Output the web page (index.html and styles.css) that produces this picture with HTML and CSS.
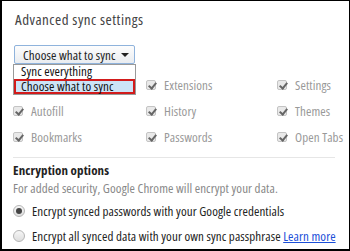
FILE: index.html
```html
<!DOCTYPE html>
<html lang="en">
<head>
    <meta charset="UTF-8">
    <title>Advanced sync settings</title>
    <link rel="stylesheet" href="styles.css">
</head>
<body>
    <div class="frame">
        <div class="title">Advanced sync settings</div>

        <div class="picker">
            <div class="select-box">
                <span>Choose what to sync</span>
                <span class="arrow"></span>
            </div>
            <div class="options">
                <div class="option">Sync everything</div>
                <div class="option selected">Choose what to sync</div>
            </div>
        </div>

        <div class="types">
            <div class="type"></div>
            <div class="type"><span class="check"></span>Extensions</div>
            <div class="type"><span class="check"></span>Settings</div>
            <div class="type"><span class="check"></span>Autofill</div>
            <div class="type"><span class="check"></span>History</div>
            <div class="type"><span class="check"></span>Themes</div>
            <div class="type"><span class="check"></span>Bookmarks</div>
            <div class="type"><span class="check"></span>Passwords</div>
            <div class="type"><span class="check"></span>Open Tabs</div>
        </div>

        <div class="section">
            <div class="section-title">Encryption options</div>
            <div class="hint">For added security, Google Chrome will encrypt your data.</div>
            <div class="radio-row"><span class="radio checked"></span>Encrypt synced passwords with your Google credentials</div>
            <div class="radio-row"><span class="radio"></span>Encrypt all synced data with your own sync passphrase&nbsp;<a class="link" href="#">Learn more</a></div>
        </div>
    </div>
</body>
</html>
```

FILE: styles.css
```css
* {
    margin: 0;
    padding: 0;
    box-sizing: border-box;
}

body {
    font-family: 'Open Sans', 'Noto Sans', sans-serif;
    font-stretch: condensed;
    font-size: 13px;
    letter-spacing: 0.1px;
    background: #ffffff;
    color: #333;
}

.frame {
    width: 350px;
    height: 251px;
    border-style: solid;
    border-color: #000;
    border-width: 1px 1px 2px 2px;
    padding: 9px 4px 0 11px;
    overflow: hidden;
}

.title {
    font-size: 15px;
    letter-spacing: 0.5px;
    line-height: 18px;
    color: #444;
    padding-left: 2px;
}

.picker {
    position: relative;
    width: 121px;
    margin-top: 17px;
    margin-left: 1px;
    z-index: 2;
}

.select-box {
    height: 19px;
    display: flex;
    align-items: center;
    justify-content: space-between;
    padding: 0 5px 0 8px;
    border: 1px solid #8fb3dc;
    border-radius: 2px;
    background: linear-gradient(#fdfdfd, #e9ecf0);
    color: #222;
}

.arrow {
    width: 0;
    height: 0;
    border-left: 4px solid transparent;
    border-right: 4px solid transparent;
    border-top: 4px solid #222;
}

.options {
    position: absolute;
    top: 19px;
    left: -1px;
    width: 123px;
    background: #fff;
    border: 1px solid #999;
    color: #111;
}

.option {
    height: 14px;
    line-height: 12px;
    padding-left: 7px;
}

.option.selected {
    height: 15px;
    background: #cce4f7;
    border: 2px solid #d21b1b;
    padding-left: 5px;
    line-height: 10px;
}

.types {
    display: grid;
    grid-template-columns: 133px 131px 1fr;
    grid-auto-rows: 26px;
    margin-top: 8px;
}

.type {
    display: flex;
    align-items: center;
    color: #999;
    white-space: nowrap;
}

.check {
    width: 10px;
    height: 10px;
    margin-right: 8px;
    border: 1px solid #c4c4c4;
    border-radius: 2px;
    background: #e9e9e9;
    position: relative;
    flex-shrink: 0;
}

.check::after {
    content: '';
    position: absolute;
    left: 3px;
    top: 0px;
    width: 3px;
    height: 6px;
    border-right: 2px solid #666;
    border-bottom: 2px solid #666;
    transform: rotate(40deg);
}

.section {
    margin-top: 7px;
    padding-top: 4px;
    margin-right: 10px;
    border-top: 1px solid #e6e6e6;
}

.section-title {
    font-weight: 700;
    line-height: 16px;
    color: #222;
}

.hint {
    margin-top: 2px;
    line-height: 16px;
    color: #888;
}

.radio-row {
    display: flex;
    align-items: center;
    height: 20px;
    margin-top: 5px;
    color: #222;
    white-space: nowrap;
}

.radio-row + .radio-row {
    margin-top: 5px;
}

.radio {
    width: 12px;
    height: 12px;
    margin-right: 7px;
    border: 1px solid #b5b5b5;
    border-radius: 50%;
    background: linear-gradient(#f6f6f6, #dedede);
    position: relative;
    flex-shrink: 0;
}

.radio.checked::after {
    content: '';
    position: absolute;
    top: 2px;
    left: 2px;
    width: 6px;
    height: 6px;
    border-radius: 50%;
    background: #444;
}

.link {
    color: #1a4ed8;
    text-decoration: underline;
}
```
